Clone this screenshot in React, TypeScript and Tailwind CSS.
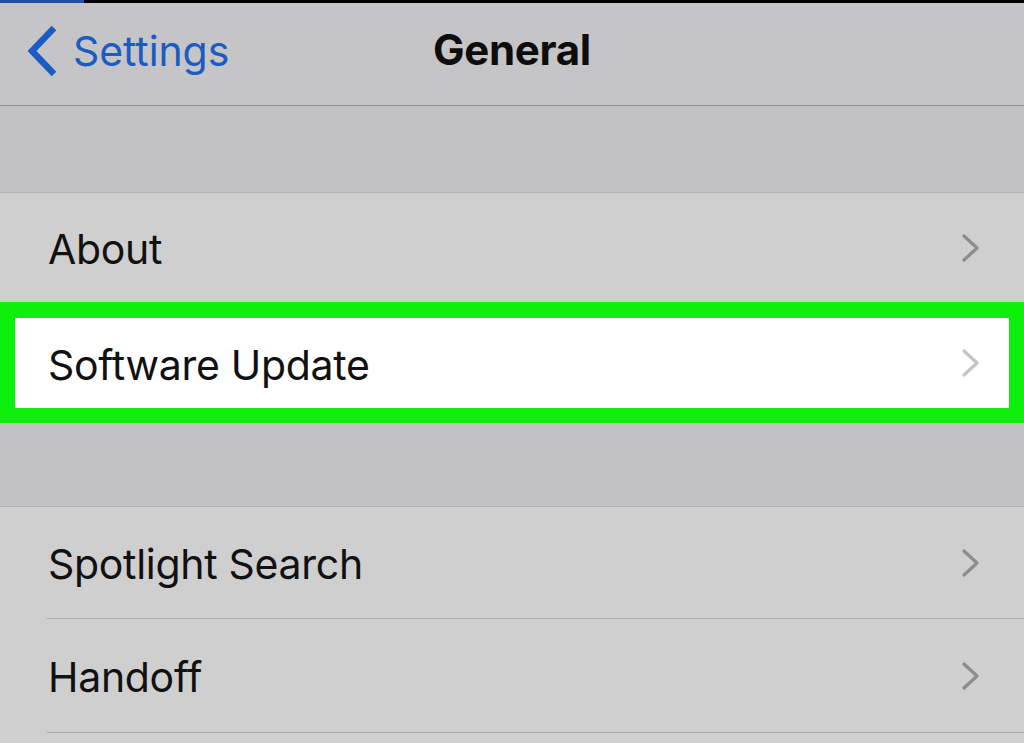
import { ReactNode } from "react";

function Chevron({ light }: { light?: boolean }) {
  return (
    <svg width="22" height="30" viewBox="0 0 22 30" fill="none" className="shrink-0">
      <path
        d="M4 3 L17 15 L4 27"
        stroke={light ? "#c3c3c8" : "#8b8b90"}
        strokeWidth="3.2"
        strokeLinecap="round"
        strokeLinejoin="round"
      />
    </svg>
  );
}

function Row({ label, light, children }: { label: string; light?: boolean; children?: ReactNode }) {
  return (
    <div className="flex h-full items-center justify-between pl-[48px] pr-[42px]">
      <span className="pt-[4px] text-[41px] leading-none text-[#111] tracking-[-0.3px]">{label}</span>
      {children ?? <Chevron light={light} />}
    </div>
  );
}

export default function App() {
  return (
    <div className="h-[743px] w-[1024px] overflow-hidden bg-[#c1c1c6] font-['Inter','Liberation_Sans',sans-serif]">
      {/* status strip */}
      <div className="flex h-[3px] bg-black">
        <div className="w-[84px] bg-[#1f4fa8]" />
      </div>

      {/* navigation bar */}
      <div className="grid h-[103px] grid-cols-[1fr_auto_1fr] items-center border-b border-[#8d8d92] bg-[#c5c5c7]">
        <div className="flex items-center gap-[14px] pl-[25px] pb-[6px]">
          <svg width="34" height="54" viewBox="0 0 34 54" fill="none">
            <path d="M29 4 L7 27 L29 50" stroke="#1a5cc4" strokeWidth="6.5" strokeLinejoin="miter" />
          </svg>
          <span className="text-[41px] leading-none text-[#1a5cc4] tracking-[-0.1px]">Settings</span>
        </div>
        <div className="pb-[8px] text-[42px] font-bold leading-none text-[#0d0d0d] tracking-[-0.3px]">General</div>
        <div />
      </div>

      {/* section gap */}
      <div className="h-[87px] border-b border-[#b3b3b7] bg-[#c1c1c6]" />

      <div className="h-[109px] bg-[#cfcfcf]">
        <Row label="About" />
      </div>

      {/* highlighted row */}
      <div className="bg-[#0cf00c] pt-[16px] pb-[15px] pl-[15px] pr-[15px]">
        <div className="h-[90px] bg-white">
          <div className="flex h-full items-center justify-between pl-[33px] pr-[27px]">
            <span className="pt-[4px] text-[41px] leading-none text-[#111] tracking-[-0.3px]">Software Update</span>
            <Chevron light />
          </div>
        </div>
      </div>

      <div className="h-[84px] border-b border-[#b3b3b7] bg-[#c1c1c6]" />

      <div className="bg-[#cfcfcf]">
        <div className="h-[111px]">
          <Row label="Spotlight Search" />
        </div>
        <div className="ml-[47px] h-px bg-[#aaaaad]" />
        <div className="h-[113px]">
          <Row label="Handoff" />
        </div>
        <div className="ml-[47px] h-px bg-[#aaaaad]" />
        <div className="h-[60px]" />
      </div>
    </div>
  );
}
